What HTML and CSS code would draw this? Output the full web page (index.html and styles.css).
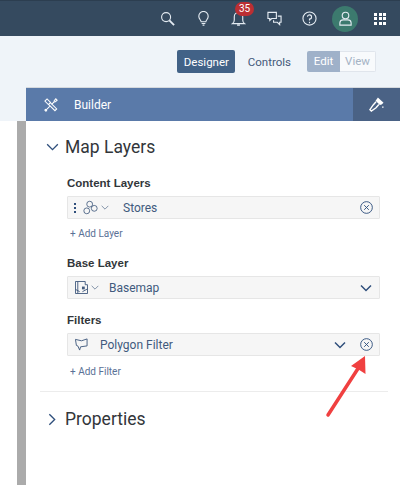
FILE: index.html
```html
<!DOCTYPE html>
<html lang="en">
<head>
    <meta charset="UTF-8">
    <title>Map Layers Builder</title>
    <link rel="stylesheet" href="styles.css">
</head>
<body>
    <header class="shell-bar">
        <svg class="shell-icon" viewBox="0 0 16 16"><circle cx="6.500" cy="6.500" r="4.800"/><path d="M10 10l5 5" stroke-width="2"/></svg>
        <svg class="shell-icon" viewBox="0 0 16 16"><path d="M5.500 11.500C5.300 9.500 3 8.600 3 5.500a5 5 0 0 1 10 0c0 3.100-2.300 4-2.500 6zM6 13.300h4M7 15h2"/></svg>
        <div class="bell">
            <svg class="shell-icon" viewBox="0 0 16 16"><path d="M1.500 13.500c1.500-1 2-2 2-4V6a4.500 4.500 0 0 1 9 0v3.500c0 2 .5 3 2 4zM6.500 15h3"/></svg>
            <span class="badge">35</span>
        </div>
        <svg class="shell-icon" viewBox="0 0 16 16"><path d="M1 1.500h9v6.500H5l-2 2V8H1zM11.500 5.500H15V12h-1.500v2.500L11 12H7V9.800"/></svg>
        <svg class="shell-icon" viewBox="0 0 16 16"><circle cx="8" cy="8" r="7"/><path d="M5.800 6.200A2.200 2.200 0 1 1 8 8.500v1.500M8 11.500v1.500"/></svg>
        <div class="avatar">
            <svg viewBox="0 0 16 16"><circle cx="8" cy="4.800" r="3.500"/><path d="M2 15v-2.500a3.500 3.500 0 0 1 3.500-3h5a3.500 3.500 0 0 1 3.500 3V15z"/></svg>
        </div>
        <div class="apps">
            <i></i><i></i><i></i><i></i><i></i><i></i><i></i><i></i><i></i>
        </div>
    </header>

    <section class="page-head">
        <div class="tabs">
            <button class="btn btn-active">Designer</button>
            <button class="btn btn-plain">Controls</button>
            <div class="toggle">
                <span class="toggle-on">Edit</span>
                <span class="toggle-off">View</span>
            </div>
        </div>
        <div class="builder-bar">
            <svg class="bar-icon" viewBox="0 0 16 16"><path d="M1 3.500L3.500 1l4 4-2.500 2.500zM5.500 7.500l7 7 2-2-7-7M8.500 7.500l3-3 .2-1.500L13.500 1l1.500 1.500L13 4.300l-1.500.2-3 3M6.500 9.500L2.500 13.500l-1-.5-.5 1 1 1 1-.5-.5-1"/></svg>
            <span class="bar-title">Builder</span>
            <div class="bar-side">
                <svg class="bar-icon brush" viewBox="0 0 16 16"><path class="solid" d="M9.500 0.500L15.500 6 13.500 8 11.500 8.500 7 4z"/><path d="M7.500 5L4.500 8.500 1 13.500 2.500 15 7.500 11.500 10.500 8"/><path class="solid" d="M14 10h1.500v1.500H14z"/></svg>
            </div>
        </div>
    </section>

    <main class="workspace">
        <div class="panel">
            <div class="section-head">
                <svg class="chev-big" viewBox="0 0 14 9"><path d="M1 1.500l6 6 6-6"/></svg>
                <h2>Map Layers</h2>
            </div>

            <div class="group group-first">
                <h3>Content Layers</h3>
                <div class="field">
                    <span class="dots"><i></i><i></i><i></i></span>
                    <svg class="type-icon" viewBox="0 0 18 18"><circle cx="8" cy="5" r="3.500"/><circle cx="4.500" cy="13" r="3.500"/><circle cx="13.500" cy="10" r="3.500"/></svg>
                    <svg class="chev-small" viewBox="0 0 9 6"><path d="M.5 1l4 4 4-4"/></svg>
                    <span class="field-text">Stores</span>
                    <svg class="clear" viewBox="0 0 14 14"><circle cx="7" cy="7" r="6.300"/><path d="M4.500 4.500l5 5M9.500 4.500l-5 5"/></svg>
                </div>
                <a class="add-link">+ Add Layer</a>
            </div>

            <div class="group">
                <h3>Base Layer</h3>
                <div class="field">
                    <svg class="type-icon type-map" viewBox="0 0 14 14"><path d="M.5.500h10.500V4h2.500v9.500H.5zM3 .5v13M.5 9L5 11.500M8 11.500l5.500-3"/><rect class="solid" x="7.500" y="6" width="3" height="3"/></svg>
                    <svg class="chev-small" viewBox="0 0 9 6"><path d="M.5 1l4 4 4-4"/></svg>
                    <span class="field-text basemap">Basemap</span>
                    <svg class="chev-field" viewBox="0 0 12 8"><path d="M1 1.500l5 5 5-5"/></svg>
                </div>
            </div>

            <div class="group group-filters">
                <h3>Filters</h3>
                <div class="field">
                    <svg class="type-icon type-poly" viewBox="0 0 14 14"><path d="M.5 1.500L7 3l6-2v7.500L6 9.500 5 13 3 8.500 1.500 8z"/></svg>
                    <span class="field-text polygon">Polygon Filter</span>
                    <svg class="chev-field chev-filter" viewBox="0 0 12 8"><path d="M1 1.500l5 5 5-5"/></svg>
                    <svg class="clear" viewBox="0 0 14 14"><circle cx="7" cy="7" r="6.300"/><path d="M4.500 4.500l5 5M9.500 4.500l-5 5"/></svg>
                </div>
                <a class="add-link add-filter">+ Add Filter</a>
            </div>

            <hr class="divider">

            <div class="section-head">
                <svg class="chev-right" viewBox="0 0 9 14"><path d="M1.500 1l6 6-6 6"/></svg>
                <h2>Properties</h2>
            </div>
        </div>
    </main>

    <svg class="callout" viewBox="0 0 60 70"><path d="M7 63L38 15"/><path class="head" d="M44 4L44.500 22 37.500 17.500 30 14z"/></svg>
</body>
</html>
```

FILE: styles.css
```css
* {
    box-sizing: border-box;
}
body {
    margin: 0;
    width: 400px;
    height: 485px;
    overflow: hidden;
    position: relative;
    background-color: #fff;
    font-family: Roboto, "Noto Sans", sans-serif;
    color: #32363a;
}
svg {
    fill: none;
    stroke: currentColor;
    flex-shrink: 0;
    display: block;
}
.shell-bar {
    height: 36px;
    background-color: #354a5f;
    border-top: 1px solid #2c3e50;
    display: flex;
    align-items: center;
    justify-content: flex-end;
    padding-right: 14px;
    color: #e4ebf2;
}
.shell-icon {
    width: 15px;
    height: 15px;
    margin-right: 20.500px;
    stroke-width: 1.200;
}
.bell {
    position: relative;
}
.badge {
    position: absolute;
    top: -9px;
    left: 4px;
    width: 19px;
    height: 14px;
    border-radius: 7px;
    background-color: #bb2f33;
    color: #fff;
    font-size: 10px;
    line-height: 14px;
    text-align: center;
}
.avatar {
    width: 26px;
    height: 26px;
    border-radius: 50%;
    background-color: #3c7a6e;
    margin-left: -5.500px;
    margin-right: 16px;
    display: flex;
    align-items: center;
    justify-content: center;
}
.avatar svg {
    width: 15px;
    height: 15px;
    stroke-width: 1.200;
}
.apps {
    width: 12px;
    display: grid;
    grid-template-columns: repeat(3, 3px);
    gap: 1.500px;
}
.apps i {
    height: 3px;
    background-color: #fff;
}
.page-head {
    height: 85px;
    background-color: #eff4f9;
    display: flex;
    flex-direction: column;
}
.tabs {
    height: 51px;
    display: flex;
    align-items: flex-start;
    justify-content: flex-end;
    padding: 14px 24px 0 0;
}
.btn {
    height: 23px;
    border: none;
    padding: 0 7px;
    font-family: inherit;
    font-size: 11.500px;
    border-radius: 2px;
    background: none;
}
.btn-active {
    background-color: #426287;
    color: #fff;
    width: 58px;
}
.btn-plain {
    color: #44597a;
    margin: 0 9px 0 6px;
}
.toggle {
    display: flex;
    height: 21px;
    font-size: 11.500px;
    line-height: 21px;
    margin-top: 1px;
    border-radius: 2px;
    overflow: hidden;
}
.toggle-on {
    background-color: #9fb1c9;
    color: #fff;
    width: 33px;
    text-align: center;
}
.toggle-off {
    background-color: #f8fafc;
    border: 1px solid #e0e5ec;
    border-left: none;
    color: #a5b3c5;
    width: 36px;
    line-height: 19px;
    text-align: center;
}
.builder-bar {
    height: 34px;
    margin-left: 26px;
    background-color: #5a7aa9;
    border-top: 1px solid #d5d9de;
    color: #fff;
    display: flex;
    align-items: center;
    padding-left: 18px;
}
.bar-icon {
    width: 14px;
    height: 14px;
    stroke-width: 1.200;
}
.brush {
    width: 15px;
    height: 15px;
    stroke-width: 1.500;
}
.bar-title {
    font-size: 12px;
    margin-left: 16px;
    flex: 1;
}
.bar-side {
    width: 47px;
    height: 100%;
    background-color: #4a6285;
    display: flex;
    align-items: center;
    justify-content: center;
}
.solid {
    fill: currentColor;
    stroke: none;
}
.workspace {
    height: 364px;
    padding-left: 17px;
}
.panel {
    height: 100%;
    border-left: 9px solid #ababab;
    padding: 14px 12px 0 14px;
}
.section-head {
    display: flex;
    align-items: center;
    height: 24px;
}
.section-head h2 {
    margin: 0;
    font-size: 17.500px;
    font-weight: 400;
    color: #32363a;
}
.chev-big {
    width: 13px;
    height: 8px;
    margin: 0 6px;
    color: #2f4f7c;
    stroke-width: 1.500;
}
.chev-right {
    width: 8px;
    height: 13px;
    margin: 0 9px 0 8px;
    color: #2f4f7c;
    stroke-width: 1.500;
}
.group {
    padding: 0 8px 0 27px;
    margin-top: 15px;
}
.group-first {
    margin-top: 17px;
}
.group-filters {
    margin-top: 14px;
}
.group h3 {
    margin: 0 0 5px;
    font-size: 11.500px;
    line-height: 15px;
    font-weight: 700;
    font-family: "Liberation Sans", sans-serif;
    color: #32363a;
}
.field {
    height: 23px;
    background-color: #f6f6f6;
    border: 1px solid #e6e6e6;
    border-radius: 1px;
    display: flex;
    align-items: center;
    padding: 0 6px;
    color: #415a7d;
}
.dots {
    display: flex;
    flex-direction: column;
    gap: 2px;
    margin-right: 7px;
}
.dots i {
    width: 2px;
    height: 2px;
    background-color: #2f4f7c;
}
.type-icon {
    width: 15px;
    height: 15px;
    stroke-width: 1;
}
.type-map {
    width: 13px;
    height: 13px;
    margin-left: 1px;
}
.type-poly {
    width: 13px;
    height: 13px;
    margin-left: 1px;
}
.chev-small {
    width: 8px;
    height: 5px;
    margin-left: 3px;
    color: #6b7f99;
    stroke-width: 1;
}
.field-text {
    font-size: 12px;
    margin-left: 14px;
    flex: 1;
}
.basemap {
    margin-left: 10px;
}
.polygon {
    margin-left: 12px;
}
.clear {
    width: 13px;
    height: 13px;
    stroke-width: 1;
    color: #2f4f7c;
}
.chev-field {
    width: 12px;
    height: 8px;
    color: #2f4f7c;
    stroke-width: 1.500;
    margin-right: 1px;
}
.chev-filter {
    margin-right: 14px;
}
.add-link {
    display: block;
    font-size: 10px;
    line-height: 14px;
    margin: 8px 0 0 3px;
    color: #5a7196;
}
.add-filter {
    margin-top: 9px;
}
.divider {
    border: none;
    border-top: 1px solid #ececec;
    margin: 12px 0 15px;
}
.callout {
    position: absolute;
    left: 321px;
    top: 352px;
    width: 60px;
    height: 70px;
    color: #f04040;
    stroke-width: 3.500;
    stroke-linecap: round;
}
.callout .head {
    fill: currentColor;
    stroke: none;
}
```
